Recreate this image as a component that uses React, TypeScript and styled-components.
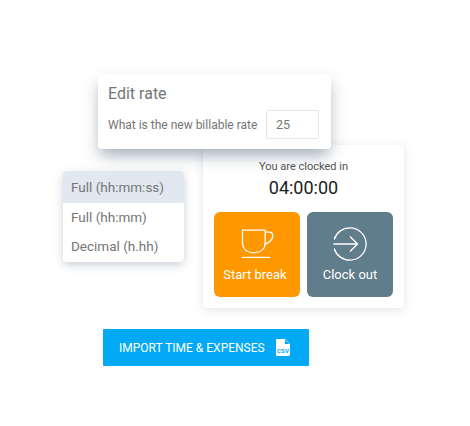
import styled, { createGlobalStyle } from "styled-components";

const GlobalStyle = createGlobalStyle`
  html, body {
    margin: 0;
    background: #ffffff;
  }

  * {
    box-sizing: border-box;
  }
`;

export default function App() {
  return (
    <>
      <GlobalStyle />
      <Canvas>
        <ClockCard>
          <ClockLabel>You are clocked in</ClockLabel>
          <ClockTime>04:00:00</ClockTime>
          <ClockActions>
            <ClockAction $color="#ff9800" $labelShift={4}>
              <svg width="34" height="30" viewBox="0 0 34 30" fill="none" stroke="#fff" strokeWidth="1.3">
                <path d="M2.5 1.2H25.2V14C25.2 19.6 21 23.6 15.4 23.6H12.2C6.6 23.6 2.5 19.6 2.5 14Z" />
                <path d="M25.2 3.2H29.2C31.4 3.2 32.8 4.8 32.8 6.8C32.8 10.6 29.2 14 24.8 15.2" />
                <path d="M2 28.4H30" />
              </svg>
              <span>Start break</span>
            </ClockAction>
            <ClockAction $color="#607d8b">
              <svg width="34" height="34" viewBox="0 0 34 34" fill="none" stroke="#fff" strokeWidth="1.3">
                <path d="M1.2 12.5C3.2 5.6 9.5 0.9 17 0.9C25.9 0.9 33.1 8.1 33.1 17C33.1 25.9 25.9 33.1 17 33.1C9.5 33.1 3.2 28.4 1.2 21.5" />
                <path d="M0.5 17H23.5M17 9.5L24.5 17L17 24.5" />
              </svg>
              <span>Clock out</span>
            </ClockAction>
          </ClockActions>
        </ClockCard>

        <RateCard>
          <RateTitle>Edit rate</RateTitle>
          <RateRow>
            <RateLabel>What is the new billable rate</RateLabel>
            <RateInput>25</RateInput>
          </RateRow>
        </RateCard>

        <FormatMenu>
          <FormatItem $active>Full (hh:mm:ss)</FormatItem>
          <FormatItem>Full (hh:mm)</FormatItem>
          <FormatItem>Decimal (h.hh)</FormatItem>
        </FormatMenu>

        <ImportButton>
          IMPORT TIME &amp; EXPENSES
          <svg width="14" height="17" viewBox="0 0 14 17">
            <path d="M1.2 0H9L14 5V15.8C14 16.5 13.5 17 12.8 17H1.2C0.5 17 0 16.5 0 15.8V1.2C0 0.5 0.5 0 1.2 0Z" fill="#fff" />
            <path d="M9 0.4V5H13.6Z" fill="#03a9f4" />
            <text x="7" y="13.8" textAnchor="middle" fontFamily="Roboto, sans-serif" fontSize="6.2" fontWeight="700" fill="#03a9f4">
              CSV
            </text>
          </svg>
        </ImportButton>
      </Canvas>
    </>
  );
}

const Canvas = styled.div`
  position: relative;
  width: 470px;
  height: 426px;
  overflow: hidden;
  font-family: Roboto, "Liberation Sans", sans-serif;
`;

const ClockCard = styled.div`
  position: absolute;
  left: 203px;
  top: 145px;
  width: 201px;
  height: 163px;
  padding: 15px 11px 0;
  background: #ffffff;
  border-radius: 4px;
  box-shadow: 0 2px 10px rgba(80, 100, 120, 0.18);

  display: flex;
  flex-direction: column;
  align-items: center;
`;

const ClockLabel = styled.div`
  color: #555555;
  font-size: 11px;
  line-height: 13px;
`;

const ClockTime = styled.div`
  margin-top: 3px;
  color: #212121;
  font-size: 18px;
  line-height: 24px;
`;

const ClockActions = styled.div`
  margin-top: 12px;
  width: 100%;
  display: flex;
  gap: 7px;
`;

const ClockAction = styled.div<{ $color: string; $labelShift?: number }>`
  width: 86px;
  height: 85px;
  padding-top: 15px;
  background: ${({ $color }) => $color};
  border-radius: 6px;
  color: #ffffff;
  font-size: 13px;

  display: flex;
  flex-direction: column;
  align-items: center;

  svg {
    height: 34px;
    flex: none;
  }

  span {
    margin-top: 5px;
    margin-right: ${({ $labelShift }) => $labelShift ?? 0}px;
    line-height: 18px;
  }
`;

const RateCard = styled.div`
  position: absolute;
  left: 98px;
  top: 74px;
  width: 233px;
  height: 75px;
  padding: 9px 12px 0 10px;
  background: #ffffff;
  border-radius: 4px;
  box-shadow: 0 8px 16px -2px rgba(70, 90, 110, 0.5);
`;

const RateTitle = styled.div`
  color: #757575;
  font-size: 16px;
  line-height: 22px;
`;

const RateRow = styled.div`
  margin-top: 5px;
  display: flex;
  align-items: center;
  justify-content: space-between;
`;

const RateLabel = styled.div`
  color: #757575;
  font-size: 12px;
`;

const RateInput = styled.div`
  width: 53px;
  height: 29px;
  padding-left: 9px;
  border: 1px solid #e6e6e6;
  border-radius: 2px;
  color: #757575;
  font-size: 12.5px;
  line-height: 27px;
`;

const FormatMenu = styled.div`
  position: absolute;
  left: 63px;
  top: 171px;
  width: 121px;
  height: 91px;
  background: #ffffff;
  border-radius: 4px;
  overflow: hidden;
  box-shadow: 0 3px 10px rgba(70, 90, 110, 0.28);
`;

const FormatItem = styled.div<{ $active?: boolean }>`
  height: ${({ $active }) => ($active ? "32px" : "28.5px")};
  padding-left: 8px;
  background: ${({ $active }) => ($active ? "#e1e8f0" : "transparent")};
  color: #757575;
  font-size: 13.5px;
  line-height: ${({ $active }) => ($active ? "32px" : "28.5px")};
`;

const ImportButton = styled.div`
  position: absolute;
  left: 103px;
  top: 329px;
  width: 206px;
  height: 37px;
  padding-left: 16px;
  background: #03a9f4;
  border-radius: 1px;
  color: #ffffff;
  font-size: 12px;

  display: flex;
  align-items: center;
  gap: 11px;
`;
